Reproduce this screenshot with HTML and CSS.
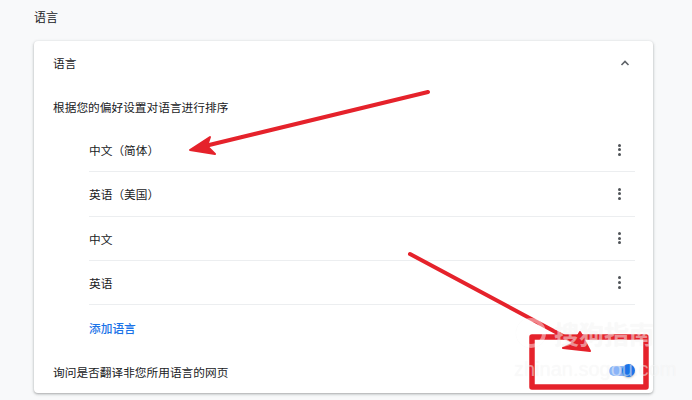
FILE: index.html
```html
<!DOCTYPE html>
<html lang="zh-CN">
<head>
    <meta charset="UTF-8">
    <title>语言</title>
    <link rel="stylesheet" href="styles.css">
</head>
<body>
    <div class="page">
        <h2 class="section-title">语言</h2>

        <div class="card">
            <!-- Card header -->
            <div class="card-head">
                <span>语言</span>
                <svg class="chevron" width="16" height="16" viewBox="0 0 16 16">
                    <path d="M4.5 10 L8 6.5 L11.5 10" fill="none" stroke="#5f6368" stroke-width="1.6"/>
                </svg>
            </div>

            <div class="card-desc">根据您的偏好设置对语言进行排序</div>

            <!-- Language list -->
            <ul class="lang-list">
                <li class="lang-row"><span>中文（简体）</span><span class="kebab"><i></i><i></i><i></i></span></li>
                <li class="lang-row"><span>英语（美国）</span><span class="kebab"><i></i><i></i><i></i></span></li>
                <li class="lang-row"><span>中文</span><span class="kebab"><i></i><i></i><i></i></span></li>
                <li class="lang-row"><span>英语</span><span class="kebab"><i></i><i></i><i></i></span></li>
            </ul>

            <div class="add-row"><a class="add-link">添加语言</a></div>

            <div class="toggle-row">
                <span>询问是否翻译非您所用语言的网页</span>
                <span class="toggle"><span class="knob"></span></span>
            </div>
        </div>
    </div>

    <!-- red annotations drawn on top of the screenshot -->
    <svg class="marks" width="692" height="400" viewBox="0 0 692 400">
        <g stroke="#e5222b" fill="#e5222b" stroke-linecap="round" stroke-linejoin="round">
            <line x1="428" y1="92" x2="205" y2="146" stroke-width="4"/>
            <polygon points="190,150 210,137 207,146 215,154" stroke-width="2"/>
            <line x1="410" y1="254" x2="578" y2="344" stroke-width="4"/>
            <polygon points="590,351 563,348 574,343 580,332" stroke-width="2"/>
            <rect x="532" y="337" width="114" height="50" fill="none" stroke-width="5.5" stroke-linecap="butt"/>
        </g>
    </svg>

    <div class="watermark">
        <span class="wm-logo"></span>
        <span class="wm-name">搜狗指南</span>
        <span class="wm-url">zhinan.sogou.com</span>
    </div>
</body>
</html>
```

FILE: styles.css
```css
* {
    margin: 0;
    padding: 0;
    box-sizing: border-box;
}

body {
    position: relative;
    width: 692px;
    height: 400px;
    overflow: hidden;
    background-color: #f8f9fa;
    color: #202124;
    font-family: "Noto Sans CJK SC", "Noto Sans", sans-serif;
    font-size: 11.7px;
}

.page {
    padding: 6px 39px 0 34px;
}

.section-title {
    font-size: 12px;
    font-weight: normal;
    line-height: 22px;
    margin-bottom: 13px;
}

.card {
    background-color: #fff;
    border-radius: 4px;
    padding: 0 18px 0 19px;
    box-shadow: 0 1px 2px rgba(60, 64, 67, 0.3), 0 1px 3px 1px rgba(60, 64, 67, 0.12);
}

.card-head {
    height: 43px;
    display: flex;
    align-items: center;
    justify-content: space-between;
}

.chevron {
    margin-right: 2px;
}

.card-desc {
    height: 44px;
    display: flex;
    align-items: center;
}

.lang-list {
    list-style: none;
    padding-left: 36px;
}

.lang-row {
    height: 44.3px;
    display: flex;
    align-items: center;
    justify-content: space-between;
    border-bottom: 1px solid #eceef0;
}

.kebab {
    width: 24px;
    margin-right: 4px;
    display: flex;
    flex-direction: column;
    align-items: center;
    gap: 1.6px;
}

.kebab i {
    width: 3px;
    height: 3px;
    border-radius: 50%;
    background-color: #4f5357;
}

.add-row {
    height: 44px;
    display: flex;
    align-items: center;
    padding-left: 36px;
}

.add-link {
    color: #1a73e8;
    font-weight: 500;
}

.toggle-row {
    height: 44px;
    display: flex;
    align-items: center;
    justify-content: space-between;
}

.toggle {
    position: relative;
    width: 24px;
    height: 10px;
    margin-right: 2px;
    border-radius: 5px;
    background-color: #8ab4f8;
}

.knob {
    position: absolute;
    right: -2px;
    top: -2px;
    width: 13px;
    height: 13px;
    border-radius: 50%;
    background-color: #1a73e8;
    box-shadow: 0 1px 2px rgba(0, 0, 0, 0.25);
}

.marks {
    position: absolute;
    left: 0;
    top: 0;
    pointer-events: none;
}

.watermark {
    position: absolute;
    left: 512px;
    top: 316px;
    width: 180px;
    height: 70px;
    pointer-events: none;
    color: rgba(255, 255, 255, 0.5);
    text-shadow: 0 0 1px rgba(0, 0, 0, 0.05);
}

.wm-logo {
    position: absolute;
    left: 4px;
    top: 2px;
    width: 30px;
    height: 30px;
    border-radius: 50%;
    border: 4px solid rgba(255, 255, 255, 0.45);
    box-shadow: 0 0 1px rgba(0, 0, 0, 0.05);
}

.wm-name {
    position: absolute;
    left: 42px;
    top: 0;
    font-size: 25px;
    font-weight: bold;
    line-height: 34px;
}

.wm-url {
    position: absolute;
    left: 2px;
    top: 42px;
    font-family: "Liberation Sans", sans-serif;
    font-size: 20px;
    line-height: 22px;
}
```
